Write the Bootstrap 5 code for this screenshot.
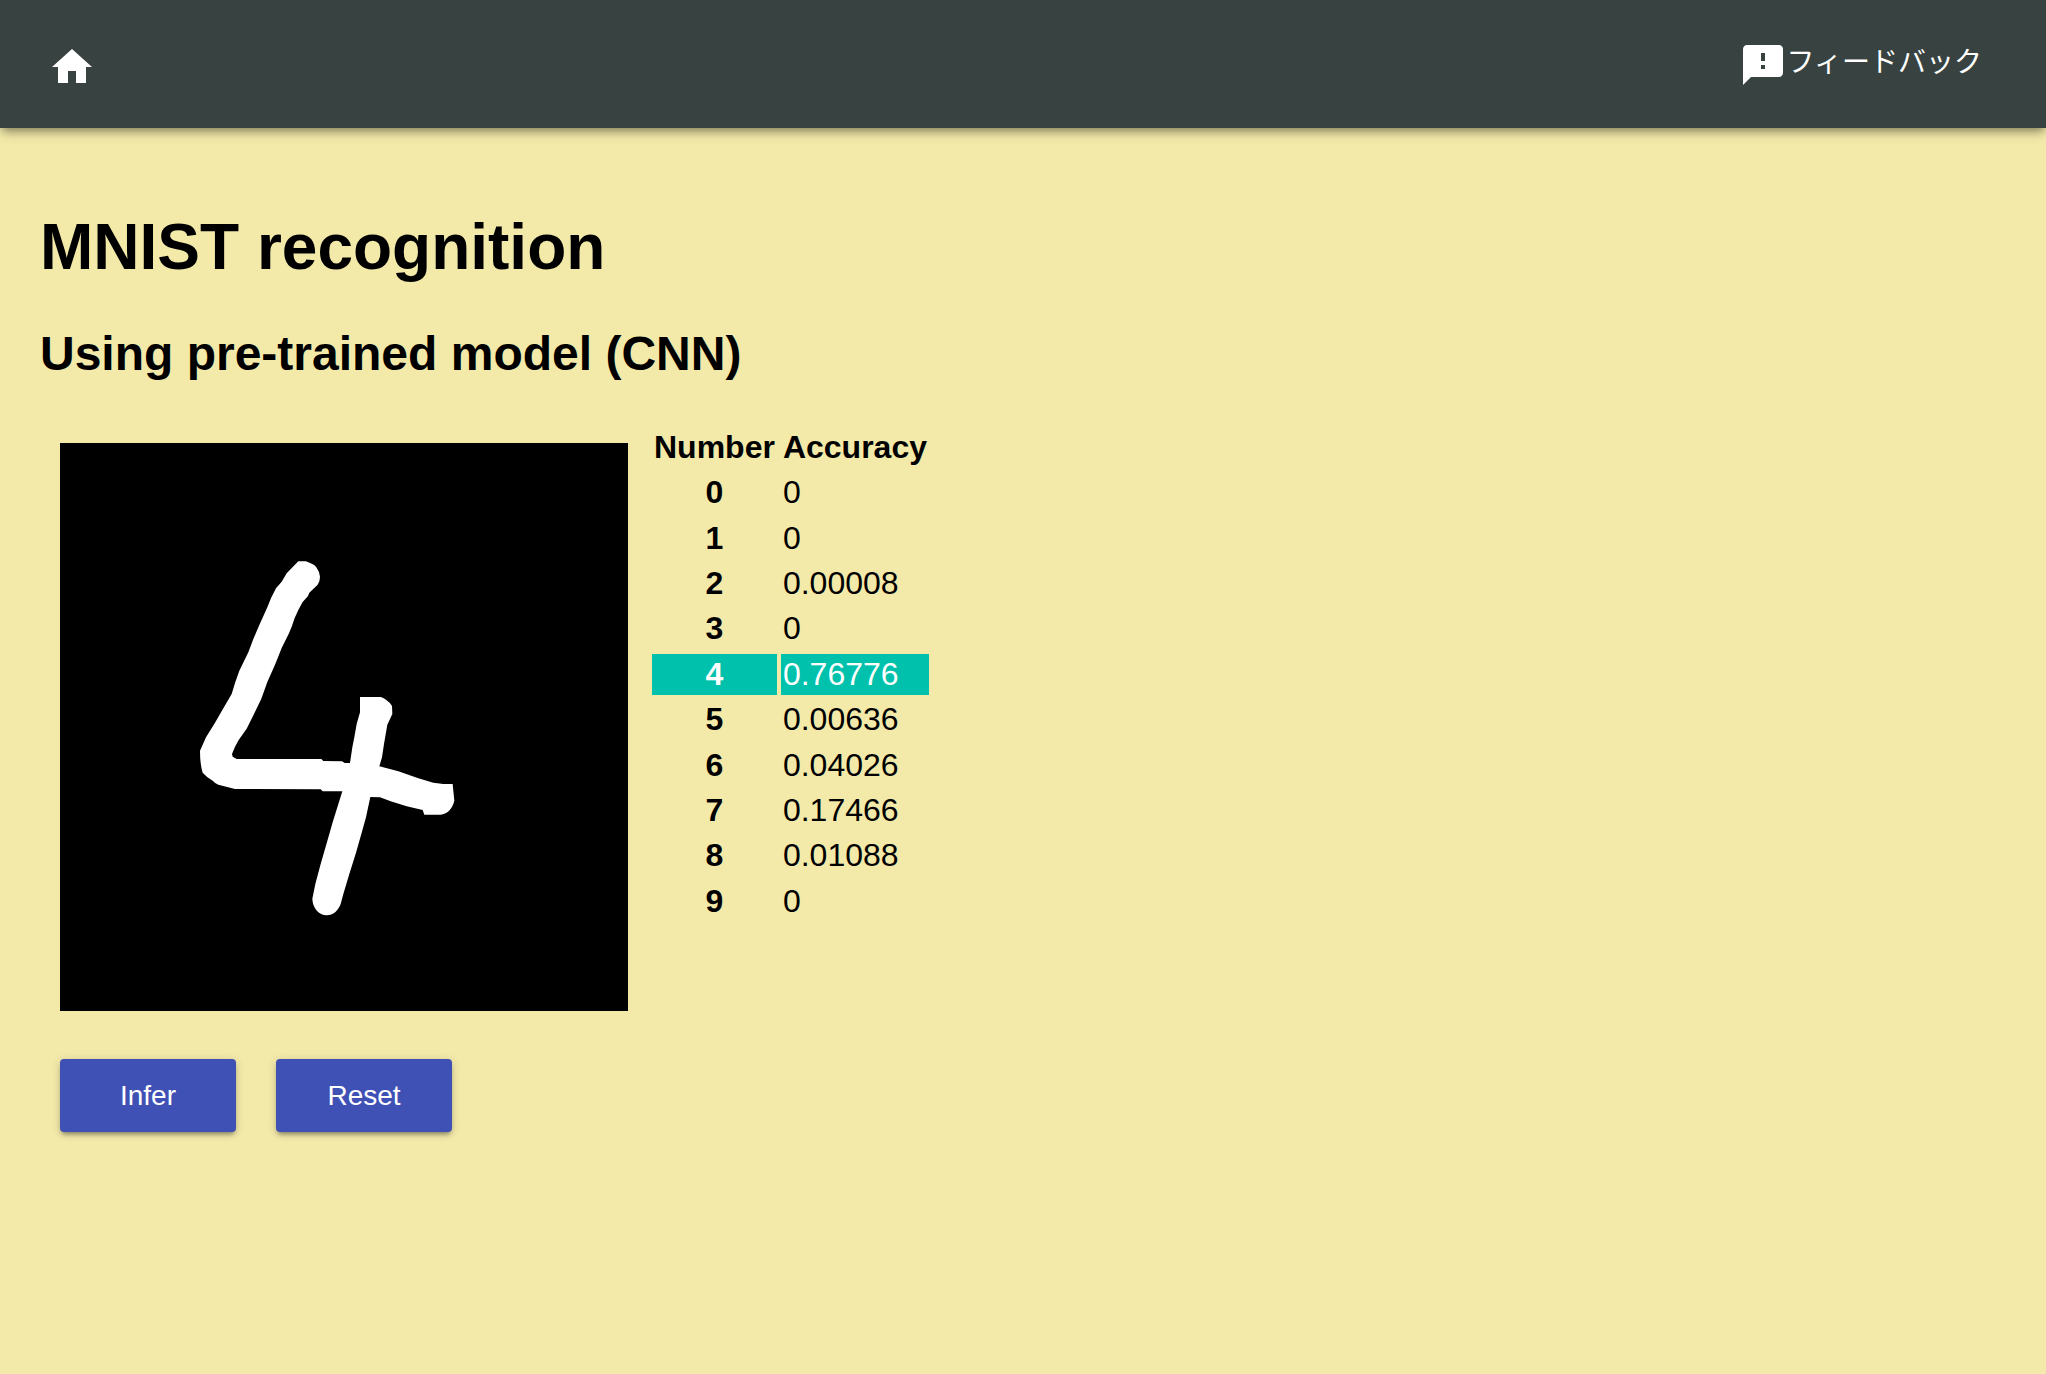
<!DOCTYPE html>
<html lang="ja">
<head>
<meta charset="utf-8">
<meta name="viewport" content="width=device-width, initial-scale=1">
<title>MNIST recognition</title>
<link rel="stylesheet" href="https://cdn.jsdelivr.net/npm/bootstrap@5.3.0/dist/css/bootstrap.min.css">
<style>
  body {
    background: #f3eaa9;
    color: #000;
    font-family: "Liberation Sans", Arial, "Noto Sans CJK JP", sans-serif;
    font-size: 32px;
  }
  .site-bar {
    min-height: 128px;
    padding: 0 64px 0 48px;
    background: #384341;
    box-shadow: 0 4px 8px -2px rgba(0, 0, 0, .3), 0 6px 12px -2px rgba(0, 0, 0, .25);
  }
  .site-bar svg { width: 48px; height: 48px; fill: #fff; }
  .home-link { padding-top: 6px; }
  .feedback-link { font-size: 28px; line-height: 48px; padding-top: 2px; }
  .feedback-link span { padding-bottom: 4px; }
  .page-body { padding: 82px 40px 40px; }
  .page-title { font-size: 64px; line-height: 74px; font-weight: 700; margin-bottom: 42px; }
  .page-subtitle { font-size: 48px; line-height: 56px; font-weight: 700; margin-bottom: 41px; }
  .workspace { gap: 20px; padding-left: 20px; }
  .digit-pad { width: 568px; height: 568px; margin-top: 20px; background: #000; }
  .score-table { border-collapse: separate; border-spacing: 4px; height: 503px; line-height: 37px; }
  .score-table th, .score-table td { padding: 2px; }
  .score-table .best { background: #00c1ab; color: #fff; }
  .actions { gap: 40px; padding: 48px 20px 0; }
  .btn-action {
    --bs-btn-color: #fff; --bs-btn-bg: #3f51b5;
    --bs-btn-hover-color: #fff; --bs-btn-hover-bg: #4a5cc2;
    --bs-btn-active-color: #fff; --bs-btn-active-bg: #35459c;
    width: 176px; height: 73px;
    border: 0; border-radius: 4px;
    font-size: 28px; line-height: 40px;
    box-shadow: 0 4px 4px -2px rgba(0, 0, 0, .35), 0 2px 8px rgba(0, 0, 0, .2);
  }
</style>
<script defer src="https://cdn.jsdelivr.net/npm/bootstrap@5.3.0/dist/js/bootstrap.bundle.min.js"></script>
</head>
<body>
<header class="site-bar d-flex align-items-center justify-content-between">
  <a class="home-link d-flex" href="#" aria-label="Home">
    <svg viewBox="0 0 24 24" aria-hidden="true"><path d="M10 20v-6h4v6h5v-8h3L12 3 2 12h3v8z"/></svg>
  </a>
  <a class="feedback-link d-flex align-items-center text-white text-decoration-none" href="#">
    <svg viewBox="0 0 24 24" aria-hidden="true"><path d="M20 2H4c-1.100 0-1.990.9-1.990 2L2 22l4-4h14c1.100 0 2-.9 2-2V4c0-1.100-.9-2-2-2zm-7 12h-2v-2h2v2zm0-4h-2V6h2v4z"/></svg>
    <span>フィードバック</span>
  </a>
</header>

<main class="page-body">
  <h1 class="page-title">MNIST recognition</h1>
  <h2 class="page-subtitle">Using pre-trained model (CNN)</h2>

  <div class="workspace d-flex flex-wrap align-items-start">
    <svg class="digit-pad" viewBox="0 0 1704 1704" role="img" aria-label="Drawn digit">
      <g transform="translate(360 293)" fill="#fff">
        <path d="M355 62L378 62L392 68Q405 72 409 80Q418 92 420 108Q420 122 413 132L388 156L384 166L368 184Q354 208 344 232Q336 258 327 278L305 322L286 370L262 424L244 474L222 520L200 564L176 598Q164 618 156 640L158 648L170 655L424 655L430 661L486 662L494 667L510 667L517 620L523 590L530 550L540 515L540 469L602 469Q610 471 618 477Q630 485 636 496L637 520L622 552L612 610L606 650L598 677L655 692L715 713L760 726L790 730L818 730L823 780C816 808 800 820 782 822L733 822L728 808L680 797L632 782L600 770L571 769L558 830L544 880L528 936L508 1000L490 1060L482 1090C474 1110 460 1124 440 1124C416 1122 398 1103 397 1074L406 1030L422 970L440 908L458 845L487 752L428 752L422 746L165 745L115 732Q104 727 98 720Q80 710 68 696Q60 672 60 630L78 590L105 546L134 496L155 460L166 424L178 390L205 335L220 295L237 255L262 200Q272 172 288 143L305 123L320 98Z"/>
      </g>
    </svg>

    <table class="score-table">
      <thead>
        <tr><th scope="col">Number</th><th scope="col">Accuracy</th></tr>
      </thead>
      <tbody>
        <tr><th scope="row" class="text-center">0</th><td>0</td></tr>
        <tr><th scope="row" class="text-center">1</th><td>0</td></tr>
        <tr><th scope="row" class="text-center">2</th><td>0.00008</td></tr>
        <tr><th scope="row" class="text-center">3</th><td>0</td></tr>
        <tr><th scope="row" class="best text-center">4</th><td class="best">0.76776</td></tr>
        <tr><th scope="row" class="text-center">5</th><td>0.00636</td></tr>
        <tr><th scope="row" class="text-center">6</th><td>0.04026</td></tr>
        <tr><th scope="row" class="text-center">7</th><td>0.17466</td></tr>
        <tr><th scope="row" class="text-center">8</th><td>0.01088</td></tr>
        <tr><th scope="row" class="text-center">9</th><td>0</td></tr>
      </tbody>
    </table>
  </div>

  <div class="actions d-flex flex-wrap">
    <button type="button" class="btn btn-action">Infer</button>
    <button type="button" class="btn btn-action">Reset</button>
  </div>
</main>
</body>
</html>
